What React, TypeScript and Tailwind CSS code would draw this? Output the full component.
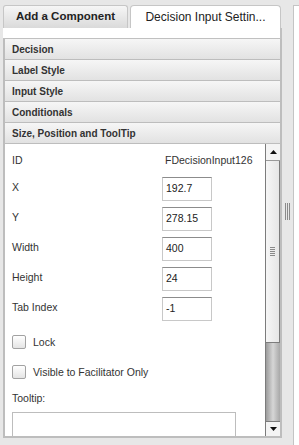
const font = { fontFamily: '"Liberation Sans", Arial, sans-serif' };

const sections = ["Decision", "Label Style", "Input Style", "Conditionals", "Size, Position and ToolTip"];

const fields = [
  { label: "X", value: "192.7" },
  { label: "Y", value: "278.15" },
  { label: "Width", value: "400" },
  { label: "Height", value: "24" },
  { label: "Tab Index", value: "-1" },
];

function Checkbox({ label, className }: { label: string; className?: string }) {
  return (
    <div className={`flex items-center gap-[7px] ${className ?? ""}`}>
      <span className="size-[14px] rounded-[2px] border border-[#a2a2a2] bg-gradient-to-b from-white to-[#e4e4e4]" />
      <span className="leading-4 text-[#333]">{label}</span>
    </div>
  );
}

function ScrollBar() {
  return (
    <div className="flex w-[15px] shrink-0 flex-col border-l border-[#7c7c7c] bg-[#dcdcdc]">
      <div className="flex h-[17px] items-center justify-center border-b border-[#9a9a9a] bg-[#f4f4f4]">
        <svg width="7" height="4" viewBox="0 0 7 4">
          <path d="M0 4 L3.5 0 L7 4 Z" fill="#111" />
        </svg>
      </div>
      <div className="flex h-[182px] items-center justify-center border-b border-r border-[#7c7c7c] bg-gradient-to-r from-[#f6f6f6] to-[#e6e6e6]">
        <div className="flex w-[5px] flex-col gap-[1px]">
          <span className="h-px bg-[#8a8a8a]" />
          <span className="h-px bg-[#8a8a8a]" />
          <span className="h-px bg-[#8a8a8a]" />
          <span className="h-px bg-[#8a8a8a]" />
          <span className="h-px bg-[#8a8a8a]" />
        </div>
      </div>
      <div className="flex-1 bg-gradient-to-r from-[#9c9c9c] via-[#d6d6d6] to-[#a8a8a8]" />
      <div className="flex h-[15px] items-center justify-center border-t border-[#7c7c7c] bg-[#f4f4f4]">
        <svg width="7" height="4" viewBox="0 0 7 4">
          <path d="M0 0 L7 0 L3.5 4 Z" fill="#111" />
        </svg>
      </div>
    </div>
  );
}

export default function App() {
  return (
    <div className="flex h-[445px] w-[299px] overflow-hidden bg-[#e7e7e7]" style={font}>
      <div className="flex w-[282px] shrink-0 flex-col pl-[3px] pt-[5px]">
        <div className="flex h-[23px] gap-[2px]">
          <div className="flex w-[125px] items-center justify-center rounded-t-[3px] border border-b-0 border-[#c6c6c6] bg-gradient-to-b from-[#f6f6f6] to-[#dadada] text-[11.5px] font-bold text-[#222]">
            Add a Component
          </div>
          <div className="flex w-[151px] items-center justify-center rounded-t-[4px] border border-b-0 border-[#c6c6c6] bg-white text-[12px] text-[#222]">
            Decision Input Settin...
          </div>
        </div>
        <div className="h-[11px] border-b border-r-2 border-[#c0c0c0] bg-white" />
        {sections.map((s) => (
          <div
            key={s}
            className="flex h-[21px] items-center border-b border-l-2 border-r-2 border-[#bdbdbd] bg-gradient-to-b from-[#f6f6f6] to-[#e2e2e2] pl-[7px] text-[10px] font-bold text-[#333]"
          >
            {s}
          </div>
        ))}
        <div className="flex h-[294px] border-b-2 border-l-2 border-r-2 border-[#bdbdbd] bg-white">
          <div className="flex-1 overflow-hidden pl-[7px] pt-[3px] text-[10.5px] text-[#333]">
            <div className="flex h-[30px] pt-[5px] leading-4">
              <span className="w-[150px]">ID</span>
              <span className="pl-[3px]">FDecisionInput126</span>
            </div>
            {fields.map((f) => (
              <div key={f.label} className="flex h-[30px] items-start">
                <span className="w-[150px] pt-[2px] leading-4">{f.label}</span>
                <div className="flex h-[24px] w-[50px] items-center border border-[#c8c8c8] border-t-[#8c8c8c] pl-[3px] text-[#222]">
                  {f.value}
                </div>
              </div>
            ))}
            <Checkbox label="Lock" className="mt-[7px]" />
            <Checkbox label="Visible to Facilitator Only" className="mt-[14px]" />
            <div className="mt-[10px] leading-4">Tooltip:</div>
            <div className="mt-[6px] h-[40px] w-[224px] border border-[#bdbdbd]" />
          </div>
          <ScrollBar />
        </div>
      </div>
      <div className="flex w-[11px] shrink-0 flex-col items-center pt-[203px]">
        <div className="flex h-[17px] gap-[1px]">
          <span className="w-px bg-[#8a8a8a]" />
          <span className="w-px bg-[#8a8a8a]" />
          <span className="w-px bg-[#8a8a8a]" />
        </div>
      </div>
      <div className="mt-[5px] flex-1 border-l border-t border-[#c4c4c4] bg-white" />
    </div>
  );
}
